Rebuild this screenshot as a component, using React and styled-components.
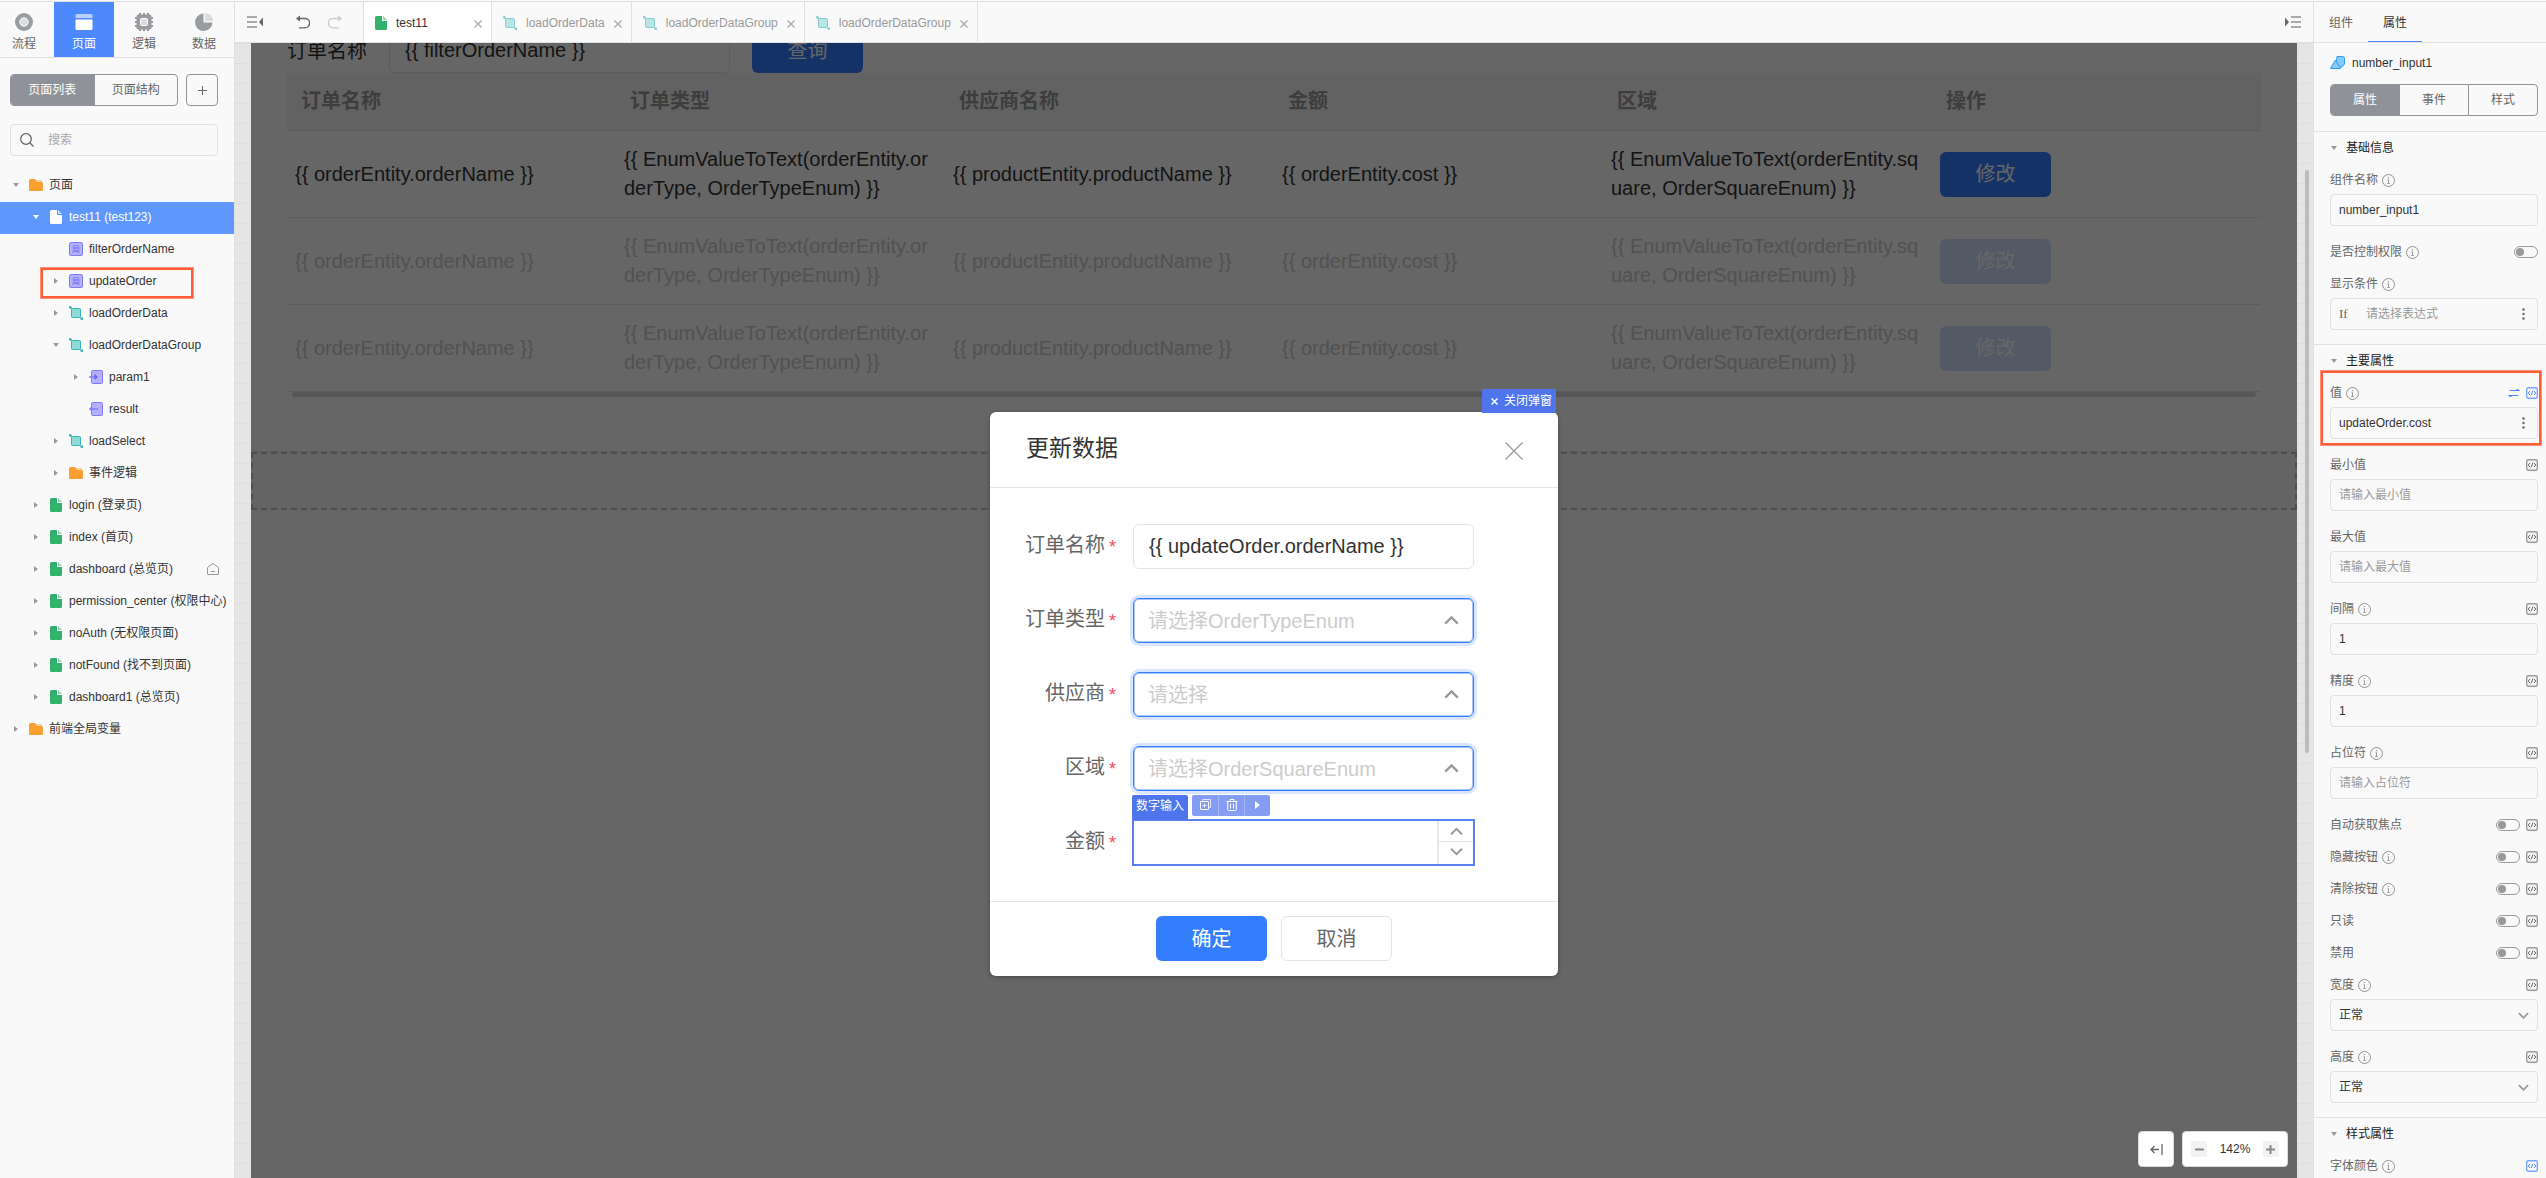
import React from 'react';
import styled, { createGlobalStyle, css } from 'styled-components';

const GlobalStyle = createGlobalStyle`
    *, *::before, *::after {
        box-sizing: border-box;
    }
    body {
        margin: 0;
        overflow: hidden;
        color: #333;
        background: #f9f9f9;
        font: 12px/20px 'Liberation Sans', 'Noto Sans CJK SC', sans-serif;
    }
    button, input, select {
        font: inherit;
        color: inherit;
        margin: 0;
        padding: 0;
        border: 0;
        background: none;
        outline: 0;
        appearance: none;
    }
    svg {
        display: block;
        flex: none;
    }
`;

/* ---------- Иконки ---------- */

const FileIcon = ({ color = '#32b16c', corner = '#8fd3ae' }) => (
    <svg width='12' height='14' viewBox='0 0 12 14'>
        <path d='M1.5 0H7v5h5v7.5a1.5 1.5 0 0 1-1.5 1.5h-9A1.5 1.5 0 0 1 0 12.500V1.500A1.500 1.500 0 0 1 1.500 0z' fill={color}/>
        <path d='M8 0l4 4H8z' fill={corner}/>
    </svg>
);

const FolderIcon = () => (
    <svg width='14' height='12' viewBox='0 0 14 12'>
        <path d='M7 1h5a1 1 0 0 1 1 1v2H7z' fill='#ffcf99'/>
        <path d='M1.500 0H6l2 3h4.500A1.500 1.500 0 0 1 14 4.500v6a1.500 1.500 0 0 1-1.500 1.500h-11A1.500 1.500 0 0 1 0 10.500v-9A1.500 1.500 0 0 1 1.500 0z' fill='#fb9f32'/>
    </svg>
);

const LogicIcon = ({ faded }) => (
    <svg width='14' height='14' viewBox='0 0 14 14' opacity={faded ? 0.6 : 1}>
        <path d='M1 1l2 2M11.500 11.500l1.500 1.500' stroke='#38b2b2' strokeWidth='1.500'/>
        <rect x='2.500' y='2.500' width='9' height='9' rx='1' fill='#8fdad8' stroke='#38b2b2'/>
        <rect x='0' y='0' width='2.500' height='2.500' rx='1' fill='#38b2b2'/>
        <rect x='11.500' y='11.500' width='2.500' height='2.500' rx='1' fill='#38b2b2'/>
    </svg>
);

const VariableIcon = () => (
    <svg width='14' height='14' viewBox='0 0 14 14'>
        <rect x='0.500' y='0.500' width='13' height='13' rx='1.500' fill='#b3b0ff' stroke='#7f7bff'/>
        <text x='7' y='10' fontSize='8' textAnchor='middle' fill='#6a63f5'>局</text>
    </svg>
);

const ParamIcon = () => (
    <svg width='14' height='14' viewBox='0 0 14 14'>
        <rect x='2.500' y='0.500' width='11' height='13' rx='1' fill='#b3b0ff' stroke='#7f7bff'/>
        <path d='M0 7h7' stroke='#7f7bff' strokeWidth='1.500'/>
        <path d='M5.500 4l3.500 3-3.500 3z' fill='#6a63f5'/>
    </svg>
);

const ResultIcon = () => (
    <svg width='14' height='14' viewBox='0 0 14 14'>
        <rect x='2.500' y='0.500' width='11' height='13' rx='1' fill='#b3b0ff' stroke='#7f7bff'/>
        <path d='M1 7h8' stroke='#7f7bff' strokeWidth='1.500'/>
        <path d='M0 7l3-3v6z' fill='#7f7bff'/>
    </svg>
);

const HomeIcon = () => (
    <svg width='12' height='12' viewBox='0 0 12 12' fill='none' stroke='#999'>
        <path d='M0.500 4.500L6 0.500l5.500 4v6.500a.5.5 0 0 1-.5.5H1a.5.5 0 0 1-.5-.5z'/>
        <path d='M4 8.500h4'/>
    </svg>
);

const FlowIcon = () => (
    <svg width='18' height='18' viewBox='0 0 18 18'>
        <circle cx='9' cy='9' r='9' fill='#999ca1'/>
        <circle cx='9' cy='9' r='4.200' fill='#dcdcdc' stroke='#fff'/>
    </svg>
);

const PageIcon = () => (
    <svg width='18' height='18' viewBox='0 0 18 18'>
        <path d='M2 1h14a1.500 1.500 0 0 1 1.500 1.500V5H.5V2.500A1.500 1.500 0 0 1 2 1z' fill='#b8cfff'/>
        <path d='M.5 6.500h17v9A1.500 1.500 0 0 1 16 17H2a1.500 1.500 0 0 1-1.500-1.500z' fill='#fff'/>
    </svg>
);

const ChipIcon = () => (
    <svg width='18' height='18' viewBox='0 0 18 18'>
        <path d='M5 0v18M9 0v18M13 0v18M0 5h18M0 9h18M0 13h18' stroke='#999ca1' strokeWidth='2'/>
        <rect x='1.500' y='1.500' width='15' height='15' rx='2' fill='#999ca1'/>
        <rect x='5.500' y='5.500' width='7' height='7' rx='1' fill='#dcdcdc' stroke='#fff'/>
    </svg>
);

const DataIcon = () => (
    <svg width='18' height='18' viewBox='0 0 18 18'>
        <path d='M8.500 0.500V9.500H17.500A8.750 8.750 0 1 1 8.500 0.500z' fill='#999ca1'/>
        <path d='M10 0a8 8 0 0 1 8 8h-8z' fill='#dcdcdc'/>
    </svg>
);

const FoldIcon = ({ flip }) => (
    <svg width='16' height='12' viewBox='0 0 16 12'>
        <g transform={flip ? 'translate(16 0) scale(-1 1)' : undefined}>
            <path d='M0 1h10M0 6h10M0 11h10' stroke='#aaa' strokeWidth='2'/>
            <path d='M16 1.500v9L12 6z' fill='#666'/>
        </g>
    </svg>
);

const UndoIcon = ({ flip }) => (
    <svg width='14' height='14' viewBox='0 0 14 14' fill='none' stroke={flip ? '#ccc' : '#666'} strokeWidth='1.300'>
        <g transform={flip ? 'translate(14 0) scale(-1 1)' : undefined}>
            <path d='M1 3.500h8.500a4 4 0 0 1 4 4.500 4.500 4.500 0 0 1-4.500 4.800H3'/>
            <path d='M4 0.500L0 3.500l4 3z' fill={flip ? '#ccc' : '#666'} stroke='none'/>
        </g>
    </svg>
);

const CrossIcon = ({ size = 8, color = '#aaa', width = 1.3 }) => (
    <svg width={size} height={size} viewBox={`0 0 ${size} ${size}`} stroke={color} strokeWidth={width}>
        <path d={`M0.500 0.500L${size - 0.5} ${size - 0.5}M${size - 0.5} 0.500L0.500 ${size - 0.5}`}/>
    </svg>
);

const ChevronIcon = ({ down, size = 12 }) => (
    <svg width={size} height={size} viewBox='0 0 12 12' fill='none' stroke='#999' strokeWidth='1.800'>
        <path d={down ? 'M1 3.500l5 5 5-5' : 'M1 8.500l5-5 5 5'}/>
    </svg>
);

const SearchIcon = () => (
    <svg width='14' height='14' viewBox='0 0 14 14' fill='none' stroke='#666' strokeWidth='1.300'>
        <circle cx='6' cy='6' r='5.300'/>
        <path d='M10 10l3.500 3.500'/>
    </svg>
);

const PlusIcon = ({ color = '#666', width = 1 }) => (
    <svg width='9' height='9' viewBox='0 0 9 9' stroke={color} strokeWidth={width}>
        <path d='M4.500 0v9M0 4.500h9'/>
    </svg>
);

const MinusIcon = () => (
    <svg width='9' height='9' viewBox='0 0 9 9' stroke='#888' strokeWidth='2'>
        <path d='M0 4.500h9'/>
    </svg>
);

const InfoIcon = () => (
    <svg width='13' height='13' viewBox='0 0 13 13' fill='none' stroke='#888'>
        <circle cx='6.500' cy='6.500' r='6' strokeWidth='0.900'/>
        <path d='M5.500 5.500h1v4M5.200 9.500h2.600' strokeWidth='0.800'/>
        <circle cx='6.500' cy='3.600' r='0.700' fill='#888' stroke='none'/>
    </svg>
);

const CodeIcon = ({ active }) => (
    <svg width='12' height='12' viewBox='0 0 12 12' fill='none' stroke={active ? '#4d88ff' : '#666'}>
        <rect x='0.700' y='0.700' width='10.600' height='10.600' rx='1.500' strokeWidth='1.400' stroke={active ? '#7ba6ff' : '#999'}/>
        <path d='M4 4L2.200 6 4 8M8 4l1.800 2L8 8M6.800 3.800L5.200 8.200'/>
    </svg>
);

const SwapIcon = () => (
    <svg width='12' height='8' viewBox='0 0 12 8' fill='none' stroke='#4d88ff' strokeWidth='1.100'>
        <path d='M1.500 1.500H11L8.500 0M10.500 6.500H1L3.500 8'/>
    </svg>
);

const MoreIcon = () => (
    <svg width='3' height='12' viewBox='0 0 3 12' fill='#666'>
        <circle cx='1.500' cy='1.500' r='1.200'/>
        <circle cx='1.500' cy='6' r='1.200'/>
        <circle cx='1.500' cy='10.500' r='1.200'/>
    </svg>
);

const ComponentIcon = () => (
    <svg width='15' height='13' viewBox='0 0 15 13' stroke='#2a9df4'>
        <path d='M7 0.500h5.500a2 2 0 0 1 2 2V8l-2.500 3H6z' fill='#86cbff'/>
        <path d='M5.500 4L10.500 12.500H0.500z' fill='#86cbff'/>
    </svg>
);

const CopyIcon = () => (
    <svg width='11' height='11' viewBox='0 0 11 11' fill='none' stroke='#fff'>
        <path d='M2.500 2V.5h8v8H9' opacity='0.7'/>
        <rect x='0.500' y='2.500' width='8' height='8' rx='0.500'/>
        <path d='M4.500 4.500v4M2.500 6.500h4'/>
    </svg>
);

const TrashIcon = () => (
    <svg width='12' height='12' viewBox='0 0 12 12' fill='none' stroke='#fff'>
        <path d='M0.500 2.500h11M4 2.500v-2h4v2M1.700 2.500v8a1 1 0 0 0 1 1h6.600a1 1 0 0 0 1-1v-8M4.500 4.500v5M7.500 4.500v5'/>
    </svg>
);

const PlayIcon = () => (
    <svg width='5' height='8' viewBox='0 0 5 8'>
        <path d='M0 0l5 4-5 4z' fill='#fff'/>
    </svg>
);

const DockIcon = () => (
    <svg width='13' height='11' viewBox='0 0 13 11' fill='none' stroke='#666' strokeWidth='1.300'>
        <path d='M9 5.500H1M4.500 2L1 5.500 4.500 9M12 0v11'/>
    </svg>
);

/* ---------- Каркас ---------- */

const Page = styled.div`
    height: 100vh;
    display: flex;
    flex-direction: column;
    overflow: hidden;
    &::before {
        content: '';
        flex: none;
        height: 2px;
        border-bottom: 1px solid #e0e0e0;
    }
`;

const Columns = styled.div`
    flex: 1;
    min-height: 0;
    display: flex;
`;

const Sidebar = styled.aside`
    width: 235px;
    flex: none;
    background: #f9f9f9;
    border-right: 1px solid #e0e0e0;
`;

const ModeNav = styled.nav`
    height: 56px;
    display: flex;
    justify-content: flex-end;
    overflow: hidden;
    border-bottom: 1px solid #e0e0e0;
`;

const ModeButton = styled.button`
    width: 60px;
    flex: none;
    display: flex;
    flex-direction: column;
    align-items: center;
    padding-top: 11px;
    gap: 3px;
    color: ${({ $active }) => ($active ? '#fff' : '#666')};
    background: ${({ $active }) => ($active ? '#4d88ff' : 'transparent')};
`;

const SwitchRow = styled.div`
    display: flex;
    gap: 8px;
    padding: 16px 16px 18px 10px;
`;

const Segments = styled.div`
    flex: 1;
    display: flex;
    height: 32px;
    border: 1px solid #8f9399;
    border-radius: 4px;
    overflow: hidden;
`;

const Segment = styled.button`
    flex: 1;
    color: ${({ $active }) => ($active ? '#fff' : '#666')};
    background: ${({ $active }) => ($active ? '#8f9399' : 'transparent')};
    & + & {
        border-left: 1px solid #8f9399;
    }
`;

const AddButton = styled.button`
    width: 32px;
    height: 32px;
    display: flex;
    align-items: center;
    justify-content: center;
    border: 1px solid #8f9399;
    border-radius: 4px;
`;

const SearchBox = styled.label`
    display: flex;
    align-items: center;
    gap: 14px;
    height: 32px;
    margin: 0 16px 14px 10px;
    padding: 0 9px;
    border: 1px solid #e0e0e0;
    border-radius: 4px;
    input {
        flex: 1;
        min-width: 0;
    }
    input::placeholder {
        color: #aaa;
    }
`;

/* ---------- Дерево ---------- */

const TreeList = styled.ul`
    list-style: none;
    margin: 0;
    padding: 0;
`;

const TreeRow = styled.li`
    position: relative;
    display: flex;
    align-items: center;
    height: 32px;
    padding: 0 15px 2px ${({ $level }) => 8 + $level * 20}px;
    white-space: nowrap;
    color: ${({ $active }) => ($active ? '#fff' : '#333')};
    background: ${({ $active }) => ($active ? '#5e98ff' : 'transparent')};
    > svg:last-child {
        margin-left: auto;
    }
`;

const Arrow = styled.span`
    width: 16px;
    flex: none;
    display: flex;
    justify-content: center;
    &::before {
        content: '';
        border: 3px solid transparent;
        ${({ $open, $light }) => $open
            ? css`border-top: 4px solid ${$light ? '#fff' : '#999'}; border-bottom: 0;`
            : css`border-left: 4px solid #999; border-right: 0;`}
        visibility: ${({ $hidden }) => ($hidden ? 'hidden' : 'visible')};
    }
`;

const IconSlot = styled.span`
    width: 16px;
    margin: 0 5px 0 4px;
    flex: none;
    display: flex;
    justify-content: center;
`;

const Highlight = styled.div`
    position: absolute;
    pointer-events: none;
    border: 3px solid #ff5c38;
    outline: 1px solid #ff8f76;
    outline-offset: -1px;
    ${({ $area }) => $area === 'tree'
        ? css`left: 40px; top: 1px; width: 154px; height: 32px;`
        : css`left: -10px; right: -4px; top: -7px; height: 76px;`}
`;

const treeIcons = {
    folder: <FolderIcon/>,
    file: <FileIcon/>,
    active: <FileIcon color='#fff' corner='#cfdfff'/>,
    logic: <LogicIcon/>,
    variable: <VariableIcon/>,
    param: <ParamIcon/>,
    result: <ResultIcon/>,
};

const tree = [
    { level: 0, icon: 'folder', text: '页面', open: true },
    { level: 1, icon: 'active', text: 'test11 (test123)', open: true, active: true },
    { level: 2, icon: 'variable', text: 'filterOrderName', leaf: true },
    { level: 2, icon: 'variable', text: 'updateOrder', marked: true },
    { level: 2, icon: 'logic', text: 'loadOrderData' },
    { level: 2, icon: 'logic', text: 'loadOrderDataGroup', open: true },
    { level: 3, icon: 'param', text: 'param1' },
    { level: 3, icon: 'result', text: 'result', leaf: true },
    { level: 2, icon: 'logic', text: 'loadSelect' },
    { level: 2, icon: 'folder', text: '事件逻辑' },
    { level: 1, icon: 'file', text: 'login (登录页)' },
    { level: 1, icon: 'file', text: 'index (首页)' },
    { level: 1, icon: 'file', text: 'dashboard (总览页)', home: true },
    { level: 1, icon: 'file', text: 'permission_center (权限中心)' },
    { level: 1, icon: 'file', text: 'noAuth (无权限页面)' },
    { level: 1, icon: 'file', text: 'notFound (找不到页面)' },
    { level: 1, icon: 'file', text: 'dashboard1 (总览页)' },
    { level: 0, icon: 'folder', text: '前端全局变量' },
];

function LeftPanel() {
    return (
        <Sidebar>
            <ModeNav>
                <ModeButton><FlowIcon/>流程</ModeButton>
                <ModeButton $active><PageIcon/>页面</ModeButton>
                <ModeButton><ChipIcon/>逻辑</ModeButton>
                <ModeButton><DataIcon/>数据</ModeButton>
            </ModeNav>
            <SwitchRow>
                <Segments>
                    <Segment $active>页面列表</Segment>
                    <Segment>页面结构</Segment>
                </Segments>
                <AddButton aria-label='新建'><PlusIcon/></AddButton>
            </SwitchRow>
            <SearchBox>
                <SearchIcon/>
                <input placeholder='搜索' aria-label='搜索'/>
            </SearchBox>
            <TreeList>
                {tree.map((item) => (
                    <TreeRow key={item.text} $level={item.level} $active={item.active}>
                        <Arrow $open={item.open} $light={item.active} $hidden={item.leaf}/>
                        <IconSlot>{treeIcons[item.icon]}</IconSlot>
                        <span>{item.text}</span>
                        {item.marked && <Highlight $area='tree'/>}
                        {item.home && <HomeIcon/>}
                    </TreeRow>
                ))}
            </TreeList>
        </Sidebar>
    );
}

/* ---------- Центральная область ---------- */

const Center = styled.main`
    flex: 1;
    min-width: 0;
    display: flex;
    flex-direction: column;
    border-right: 1px solid #e0e0e0;
`;

const TopBar = styled.div`
    height: 41px;
    flex: none;
    display: flex;
    align-items: center;
    background: #f9f9f9;
    border-bottom: 1px solid #e0e0e0;
`;

const TopTools = styled.div`
    width: 128px;
    display: flex;
    align-items: center;
    gap: 18px;
    padding-left: 12px;
    button:first-child {
        margin-right: 15px;
    }
`;

const RightTools = styled.div`
    display: flex;
    margin-left: auto;
    padding-right: 12px;
`;

const Tab = styled.div`
    display: flex;
    align-items: center;
    align-self: stretch;
    gap: 9px;
    min-width: 128px;
    padding: 1px 9px 0 11px;
    border-left: 1px solid #e0e0e0;
    color: ${({ $active }) => ($active ? '#333' : '#999')};
    background: ${({ $active }) => ($active ? '#fff' : 'transparent')};
    &:last-of-type {
        border-right: 1px solid #e0e0e0;
    }
    button {
        margin-left: auto;
        padding-top: 2px;
    }
`;

const TabStrip = styled.div`
    display: flex;
    align-self: stretch;
`;

const Workspace = styled.div`
    position: relative;
    flex: 1;
    min-height: 0;
    padding: 0 16px;
    background: linear-gradient(#dedede 1px, transparent 1px) 0 0 / 20px 20px #e5e5e5;
`;

const Stage = styled.div`
    position: relative;
    height: 100%;
    overflow: hidden;
    background: #fff;
    font-size: 20px;
    line-height: 28px;
`;

const Sheet = styled.section`
    margin-top: -16px;
    padding: 0 36px 54px;
    margin-bottom: 1px;
    background: #fff;
    border-radius: 0 0 6px 6px;
    box-shadow: 0 1px 2px #ddd;
`;

const FilterRow = styled.div`
    display: flex;
    align-items: center;
    height: 46px;
    gap: 22px;
    padding-top: 1px;
`;

const TextField = styled.input`
    width: 341px;
    height: 45px;
    padding: 0 15px;
    border: 1px solid #e5e5e5;
    border-radius: 6px;
    color: #333;
`;

const MainButton = styled.button`
    width: 111px;
    height: 45px;
    border-radius: 6px;
    color: ${({ $plain }) => ($plain ? '#666' : '#fff')};
    background: ${({ $plain, $muted }) => ($plain ? '#fff' : $muted ? '#cfe2ff' : '#337eff')};
    border: 1px solid ${({ $plain }) => ($plain ? '#e5e5e5' : 'transparent')};
`;

const DataTable = styled.table`
    width: 100%;
    table-layout: fixed;
    border-spacing: 0;
    line-height: 29px;
    th, td {
        padding: 0 8px;
        text-align: left;
        border-bottom: 1px solid #e5e5e5;
        word-break: break-all;
    }
    th {
        height: 58px;
        padding: 0 14px;
        color: #999;
        background: #f5f5f5;
    }
    td {
        height: 87px;
    }
`;

const DataRow = styled.tr`
    color: ${({ $muted }) => ($muted ? '#ccc' : '#333')};
`;

const TableScroll = styled.div`
    height: 5px;
    margin: 0 5px;
    border-radius: 3px;
    background: #d9d9d9;
`;

const DropZone = styled.div`
    height: 58px;
    border: 2px dashed #c4c4c4;
    background: #fafafa;
`;

const Overlay = styled.div`
    position: absolute;
    inset: 0;
    display: flex;
    justify-content: center;
    align-items: flex-start;
    padding-top: 369px;
    background: rgba(0, 0, 0, 0.6);
`;

const Dialog = styled.div`
    position: relative;
    width: 568px;
    background: #fff;
    border-radius: 6px;
    box-shadow: 0 1px 4px rgba(0, 0, 0, 0.3);
`;

const CloseTag = styled.button`
    position: absolute;
    right: 2px;
    bottom: calc(100% - 1px);
    display: flex;
    align-items: center;
    gap: 6px;
    height: 24px;
    padding: 0 4px 0 9px;
    font-size: 12px;
    color: #fff;
    background: #4e75ec;
    border-radius: 2px 2px 0 0;
`;

const DialogHeader = styled.header`
    display: flex;
    align-items: center;
    justify-content: space-between;
    height: 76px;
    padding: 2px 35px 0 36px;
    border-bottom: 1px solid #e5e5e5;
    h2 {
        margin: 0;
        padding-bottom: 5px;
        font-size: 23px;
        font-weight: normal;
    }
`;

const DialogBody = styled.div`
    display: grid;
    row-gap: 29px;
    padding: 36px;
`;

const FormRow = styled.div`
    display: flex;
    height: 45px;
    > label {
        width: 107px;
        padding: 7px 17px 0 0;
        display: flex;
        justify-content: flex-end;
        white-space: nowrap;
        color: #666;
    }
    > label::after {
        content: '*';
        margin: 2px 0 0 4px;
        font-size: 18px;
        color: #f5475b;
    }
`;

const SelectWrap = styled.div`
    position: relative;
    width: 341px;
    select {
        width: 100%;
        height: 45px;
        padding: 0 14px;
        border: 1px solid #337eff;
        border-radius: 6px;
        box-shadow: 0 0 0 3px #dbe7ff, inset 0 0 0 1px #a9c8ff;
        color: #ccc;
    }
    svg {
        position: absolute;
        right: 15px;
        top: 15px;
        pointer-events: none;
    }
`;

const NumberBox = styled.div`
    position: relative;
    display: flex;
    width: 341px;
    outline: 2px solid #5b80ee;
    outline-offset: -1px;
    input {
        flex: 1;
        min-width: 0;
        padding: 0 15px;
        appearance: textfield;
    }
`;

const Stepper = styled.div`
    width: 37px;
    display: flex;
    flex-direction: column;
    border-left: 2px solid #e8e8e8;
    button {
        flex: 1;
        display: flex;
        align-items: center;
        justify-content: center;
        padding-top: 2px;
    }
    button + button {
        border-top: 1px solid #e5e5e5;
        padding: 0 0 4px;
    }
`;

const ToolTags = styled.div`
    position: absolute;
    left: -1px;
    bottom: 100%;
    display: flex;
    align-items: flex-start;
    gap: 4px;
    font-size: 12px;
    line-height: 23px;
`;

const NameTag = styled.span`
    height: 25px;
    padding: 0 4px;
    color: #fff;
    background: #4e75ec;
    border-radius: 2px 2px 0 0;
`;

const ToolGroup = styled.div`
    display: flex;
    height: 21px;
    background: #849cf3;
    border-radius: 2px;
    button {
        width: 26px;
        display: flex;
        align-items: center;
        justify-content: center;
        padding-bottom: 2px;
    }
    button + button {
        border-left: 1px solid #a3b5f7;
    }
`;

const DialogFooter = styled.footer`
    display: flex;
    justify-content: center;
    gap: 14px;
    padding: 14px 0 15px;
    border-top: 1px solid #e5e5e5;
`;

const ScrollThumb = styled.div`
    position: absolute;
    top: 127px;
    right: 4px;
    width: 4px;
    height: 583px;
    border-radius: 2px;
    background: #bcbcbc;
`;

const ZoomControls = styled.div`
    position: absolute;
    right: 25px;
    bottom: 11px;
    display: flex;
    gap: 8px;
`;

const ZoomPanel = styled.div`
    display: flex;
    align-items: center;
    justify-content: space-between;
    width: ${({ $wide }) => ($wide ? 106 : 36)}px;
    height: 36px;
    padding: 0 8px;
    background: #fff;
    border: 1px solid #d9d9d9;
    border-radius: 4px;
`;

const ZoomButton = styled.button`
    width: ${({ $plain }) => ($plain ? 18 : 16)}px;
    height: 16px;
    display: flex;
    align-items: center;
    justify-content: center;
    border-radius: 2px;
    background: ${({ $plain }) => ($plain ? 'transparent' : '#f2f2f2')};
`;

const tabs = ['test11', 'loadOrderData', 'loadOrderDataGroup', 'loadOrderDataGroup'];
const columns = ['订单名称', '订单类型', '供应商名称', '金额', '区域', '操作'];
const cells = [
    '{{ orderEntity.orderName }}',
    '{{ EnumValueToText(orderEntity.orderType, OrderTypeEnum) }}',
    '{{ productEntity.productName }}',
    '{{ orderEntity.cost }}',
    '{{ EnumValueToText(orderEntity.square, OrderSquareEnum) }}',
];
const selects = [
    { id: 'orderType', label: '订单类型', placeholder: '请选择OrderTypeEnum' },
    { id: 'supplier', label: '供应商', placeholder: '请选择' },
    { id: 'square', label: '区域', placeholder: '请选择OrderSquareEnum' },
];

function UpdateDialog() {
    return (
        <Dialog role='dialog'>
            <CloseTag><CrossIcon size={7} color='#fff' width={1.5}/>关闭弹窗</CloseTag>
            <DialogHeader>
                <h2>更新数据</h2>
                <button aria-label='关闭'><CrossIcon size={18} color='#999'/></button>
            </DialogHeader>
            <DialogBody>
                <FormRow>
                    <label htmlFor='orderName'>订单名称</label>
                    <TextField id='orderName' defaultValue='{{ updateOrder.orderName }}'/>
                </FormRow>
                {selects.map(({ id, label, placeholder }) => (
                    <FormRow key={id}>
                        <label htmlFor={id}>{label}</label>
                        <SelectWrap>
                            <select id={id}><option>{placeholder}</option></select>
                            <ChevronIcon size={15}/>
                        </SelectWrap>
                    </FormRow>
                ))}
                <FormRow>
                    <label htmlFor='cost'>金额</label>
                    <NumberBox>
                        <ToolTags>
                            <NameTag>数字输入</NameTag>
                            <ToolGroup>
                                <button aria-label='复制'><CopyIcon/></button>
                                <button aria-label='删除'><TrashIcon/></button>
                                <button aria-label='更多'><PlayIcon/></button>
                            </ToolGroup>
                        </ToolTags>
                        <input id='cost' type='number'/>
                        <Stepper>
                            <button aria-label='增加'><ChevronIcon size={13}/></button>
                            <button aria-label='减少'><ChevronIcon size={13} down/></button>
                        </Stepper>
                    </NumberBox>
                </FormRow>
            </DialogBody>
            <DialogFooter>
                <MainButton>确定</MainButton>
                <MainButton $plain>取消</MainButton>
            </DialogFooter>
        </Dialog>
    );
}

function CenterPanel() {
    return (
        <Center>
            <TopBar>
                <TopTools>
                    <button aria-label='收起左侧'><FoldIcon/></button>
                    <button aria-label='撤销'><UndoIcon/></button>
                    <button aria-label='重做'><UndoIcon flip/></button>
                </TopTools>
                <TabStrip>
                    {tabs.map((name, i) => (
                        <Tab key={i} $active={i === 0}>
                            {i === 0 ? <FileIcon/> : <LogicIcon faded/>}
                            <span>{name}</span>
                            <button aria-label='关闭标签'><CrossIcon/></button>
                        </Tab>
                    ))}
                </TabStrip>
                <RightTools>
                    <button aria-label='收起右侧'><FoldIcon flip/></button>
                </RightTools>
            </TopBar>
            <Workspace>
                <Stage>
                    <Sheet>
                        <FilterRow>
                            <label htmlFor='filter'>订单名称</label>
                            <TextField id='filter' defaultValue='{{ filterOrderName }}'/>
                            <MainButton>查询</MainButton>
                        </FilterRow>
                        <DataTable>
                            <thead>
                                <tr>{columns.map((name) => <th key={name}>{name}</th>)}</tr>
                            </thead>
                            <tbody>
                                {[false, true, true].map((muted, i) => (
                                    <DataRow key={i} $muted={muted}>
                                        {cells.map((text) => <td key={text}>{text}</td>)}
                                        <td><MainButton $muted={muted}>修改</MainButton></td>
                                    </DataRow>
                                ))}
                            </tbody>
                        </DataTable>
                        <TableScroll/>
                    </Sheet>
                    <DropZone/>
                    <Overlay>
                        <UpdateDialog/>
                    </Overlay>
                </Stage>
                <ScrollThumb/>
                <ZoomControls>
                    <ZoomPanel>
                        <ZoomButton $plain aria-label='停靠'><DockIcon/></ZoomButton>
                    </ZoomPanel>
                    <ZoomPanel $wide>
                        <ZoomButton aria-label='缩小'><MinusIcon/></ZoomButton>
                        <span>142%</span>
                        <ZoomButton aria-label='放大'><PlusIcon color='#888' width={2}/></ZoomButton>
                    </ZoomPanel>
                </ZoomControls>
            </Workspace>
        </Center>
    );
}

/* ---------- Панель свойств ---------- */

const Panel = styled.aside`
    width: 232px;
    flex: none;
    overflow: hidden;
    background: #f9f9f9;
`;

const PanelTabs = styled.div`
    display: flex;
    height: 41px;
    border-bottom: 1px solid #e0e0e0;
`;

const PanelTab = styled.button`
    width: 54px;
    padding-top: 2px;
    color: ${({ $active }) => ($active ? '#333' : '#666')};
    border-bottom: 1px solid ${({ $active }) => ($active ? '#4d88ff' : 'transparent')};
`;

const PanelHead = styled.div`
    padding: 0 8px 15px 16px;
`;

const ComponentName = styled.div`
    display: flex;
    align-items: center;
    gap: 7px;
    height: 41px;
    padding-bottom: 2px;
`;

const Group = styled.section`
    padding: 0 8px 4px 16px;
    border-top: 1px solid #e0e0e0;
    h3 {
        display: flex;
        align-items: center;
        height: 32px;
        margin: 0 0 0 -4px;
        gap: 4px;
        font-size: 12px;
        font-weight: normal;
        color: #222;
    }
`;

const Field = styled.div`
    position: relative;
    margin-bottom: ${({ $inline }) => ($inline ? 2 : 10)}px;
`;

const FieldHead = styled.div`
    display: flex;
    align-items: center;
    height: 30px;
    padding-top: 2px;
    gap: 4px;
    color: #666;
    label {
        margin-right: auto;
        display: flex;
        align-items: center;
        gap: 4px;
    }
`;

const FieldTools = styled.span`
    display: flex;
    align-items: center;
    gap: 6px;
`;

const InputBox = styled.div`
    display: flex;
    align-items: center;
    height: 32px;
    padding: 0 8px;
    border: 1px solid #e0e0e0;
    border-radius: 4px;
    color: #333;
    input, select {
        flex: 1;
        min-width: 0;
    }
    input::placeholder {
        color: #999;
    }
    svg {
        margin-right: ${({ $dots }) => ($dots ? 4 : 0)}px;
    }
`;

const IfMark = styled.span`
    width: 27px;
    font-family: 'Liberation Serif', serif;
    font-size: 13px;
    color: #666;
`;

const Toggle = styled.input`
    width: 24px;
    height: 12px;
    display: flex;
    align-items: center;
    border: 1px solid #999;
    border-radius: 6px;
    &::before {
        content: '';
        width: 8px;
        height: 8px;
        margin-left: 1px;
        border-radius: 50%;
        background: #999;
    }
    &:checked {
        justify-content: flex-end;
    }
`;

const groups = [
    {
        title: '基础信息',
        fields: [
            { id: 'name', label: '组件名称', info: true, type: 'text', value: 'number_input1', plain: true },
            { id: 'auth', label: '是否控制权限', info: true, type: 'toggle', plain: true },
            { id: 'visible', label: '显示条件', info: true, type: 'text', placeholder: '请选择表达式', mark: 'If', dots: true, plain: true },
        ],
    },
    {
        title: '主要属性',
        fields: [
            { id: 'value', label: '值', info: true, type: 'text', value: 'updateOrder.cost', dots: true, linked: true },
            { id: 'min', label: '最小值', type: 'text', placeholder: '请输入最小值' },
            { id: 'max', label: '最大值', type: 'text', placeholder: '请输入最大值' },
            { id: 'step', label: '间隔', info: true, type: 'text', value: '1' },
            { id: 'precision', label: '精度', info: true, type: 'text', value: '1' },
            { id: 'placeholder', label: '占位符', info: true, type: 'text', placeholder: '请输入占位符' },
            { id: 'autofocus', label: '自动获取焦点', type: 'toggle' },
            { id: 'hideButton', label: '隐藏按钮', info: true, type: 'toggle' },
            { id: 'clearButton', label: '清除按钮', info: true, type: 'toggle' },
            { id: 'readonly', label: '只读', type: 'toggle' },
            { id: 'disabled', label: '禁用', type: 'toggle' },
            { id: 'width', label: '宽度', info: true, type: 'select', value: '正常' },
            { id: 'height', label: '高度', info: true, type: 'select', value: '正常' },
        ],
    },
    {
        title: '样式属性',
        fields: [
            { id: 'color', label: '字体颜色', info: true, type: 'none', active: true },
        ],
    },
];

function PropertyField({ field }) {
    const id = `prop-${field.id}`;
    return (
        <Field $inline={field.type === 'toggle'}>
            <FieldHead>
                <label htmlFor={id}>{field.label}{field.info && <InfoIcon/>}</label>
                <FieldTools>
                    {field.linked && <SwapIcon/>}
                    {field.type === 'toggle' && <Toggle id={id} type='checkbox'/>}
                    {!field.plain && <CodeIcon active={field.linked || field.active}/>}
                </FieldTools>
            </FieldHead>
            {field.type === 'text' && (
                <InputBox $dots={field.dots}>
                    {field.mark && <IfMark>{field.mark}</IfMark>}
                    <input id={id} defaultValue={field.value} placeholder={field.placeholder}/>
                    {field.dots && <MoreIcon/>}
                </InputBox>
            )}
            {field.type === 'select' && (
                <InputBox>
                    <select id={id}><option>{field.value}</option></select>
                    <ChevronIcon down size={11}/>
                </InputBox>
            )}
            {field.linked && <Highlight/>}
        </Field>
    );
}

function RightPanel() {
    return (
        <Panel>
            <PanelTabs>
                <PanelTab>组件</PanelTab>
                <PanelTab $active>属性</PanelTab>
            </PanelTabs>
            <PanelHead>
                <ComponentName><ComponentIcon/>number_input1</ComponentName>
                <Segments>
                    <Segment $active>属性</Segment>
                    <Segment>事件</Segment>
                    <Segment>样式</Segment>
                </Segments>
            </PanelHead>
            {groups.map((group) => (
                <Group key={group.title}>
                    <h3><Arrow $open/>{group.title}</h3>
                    {group.fields.map((field) => <PropertyField key={field.id} field={field}/>)}
                </Group>
            ))}
        </Panel>
    );
}

function App() {
    return (
        <Page>
            <GlobalStyle/>
            <Columns>
                <LeftPanel/>
                <CenterPanel/>
                <RightPanel/>
            </Columns>
        </Page>
    );
}

export default App;
